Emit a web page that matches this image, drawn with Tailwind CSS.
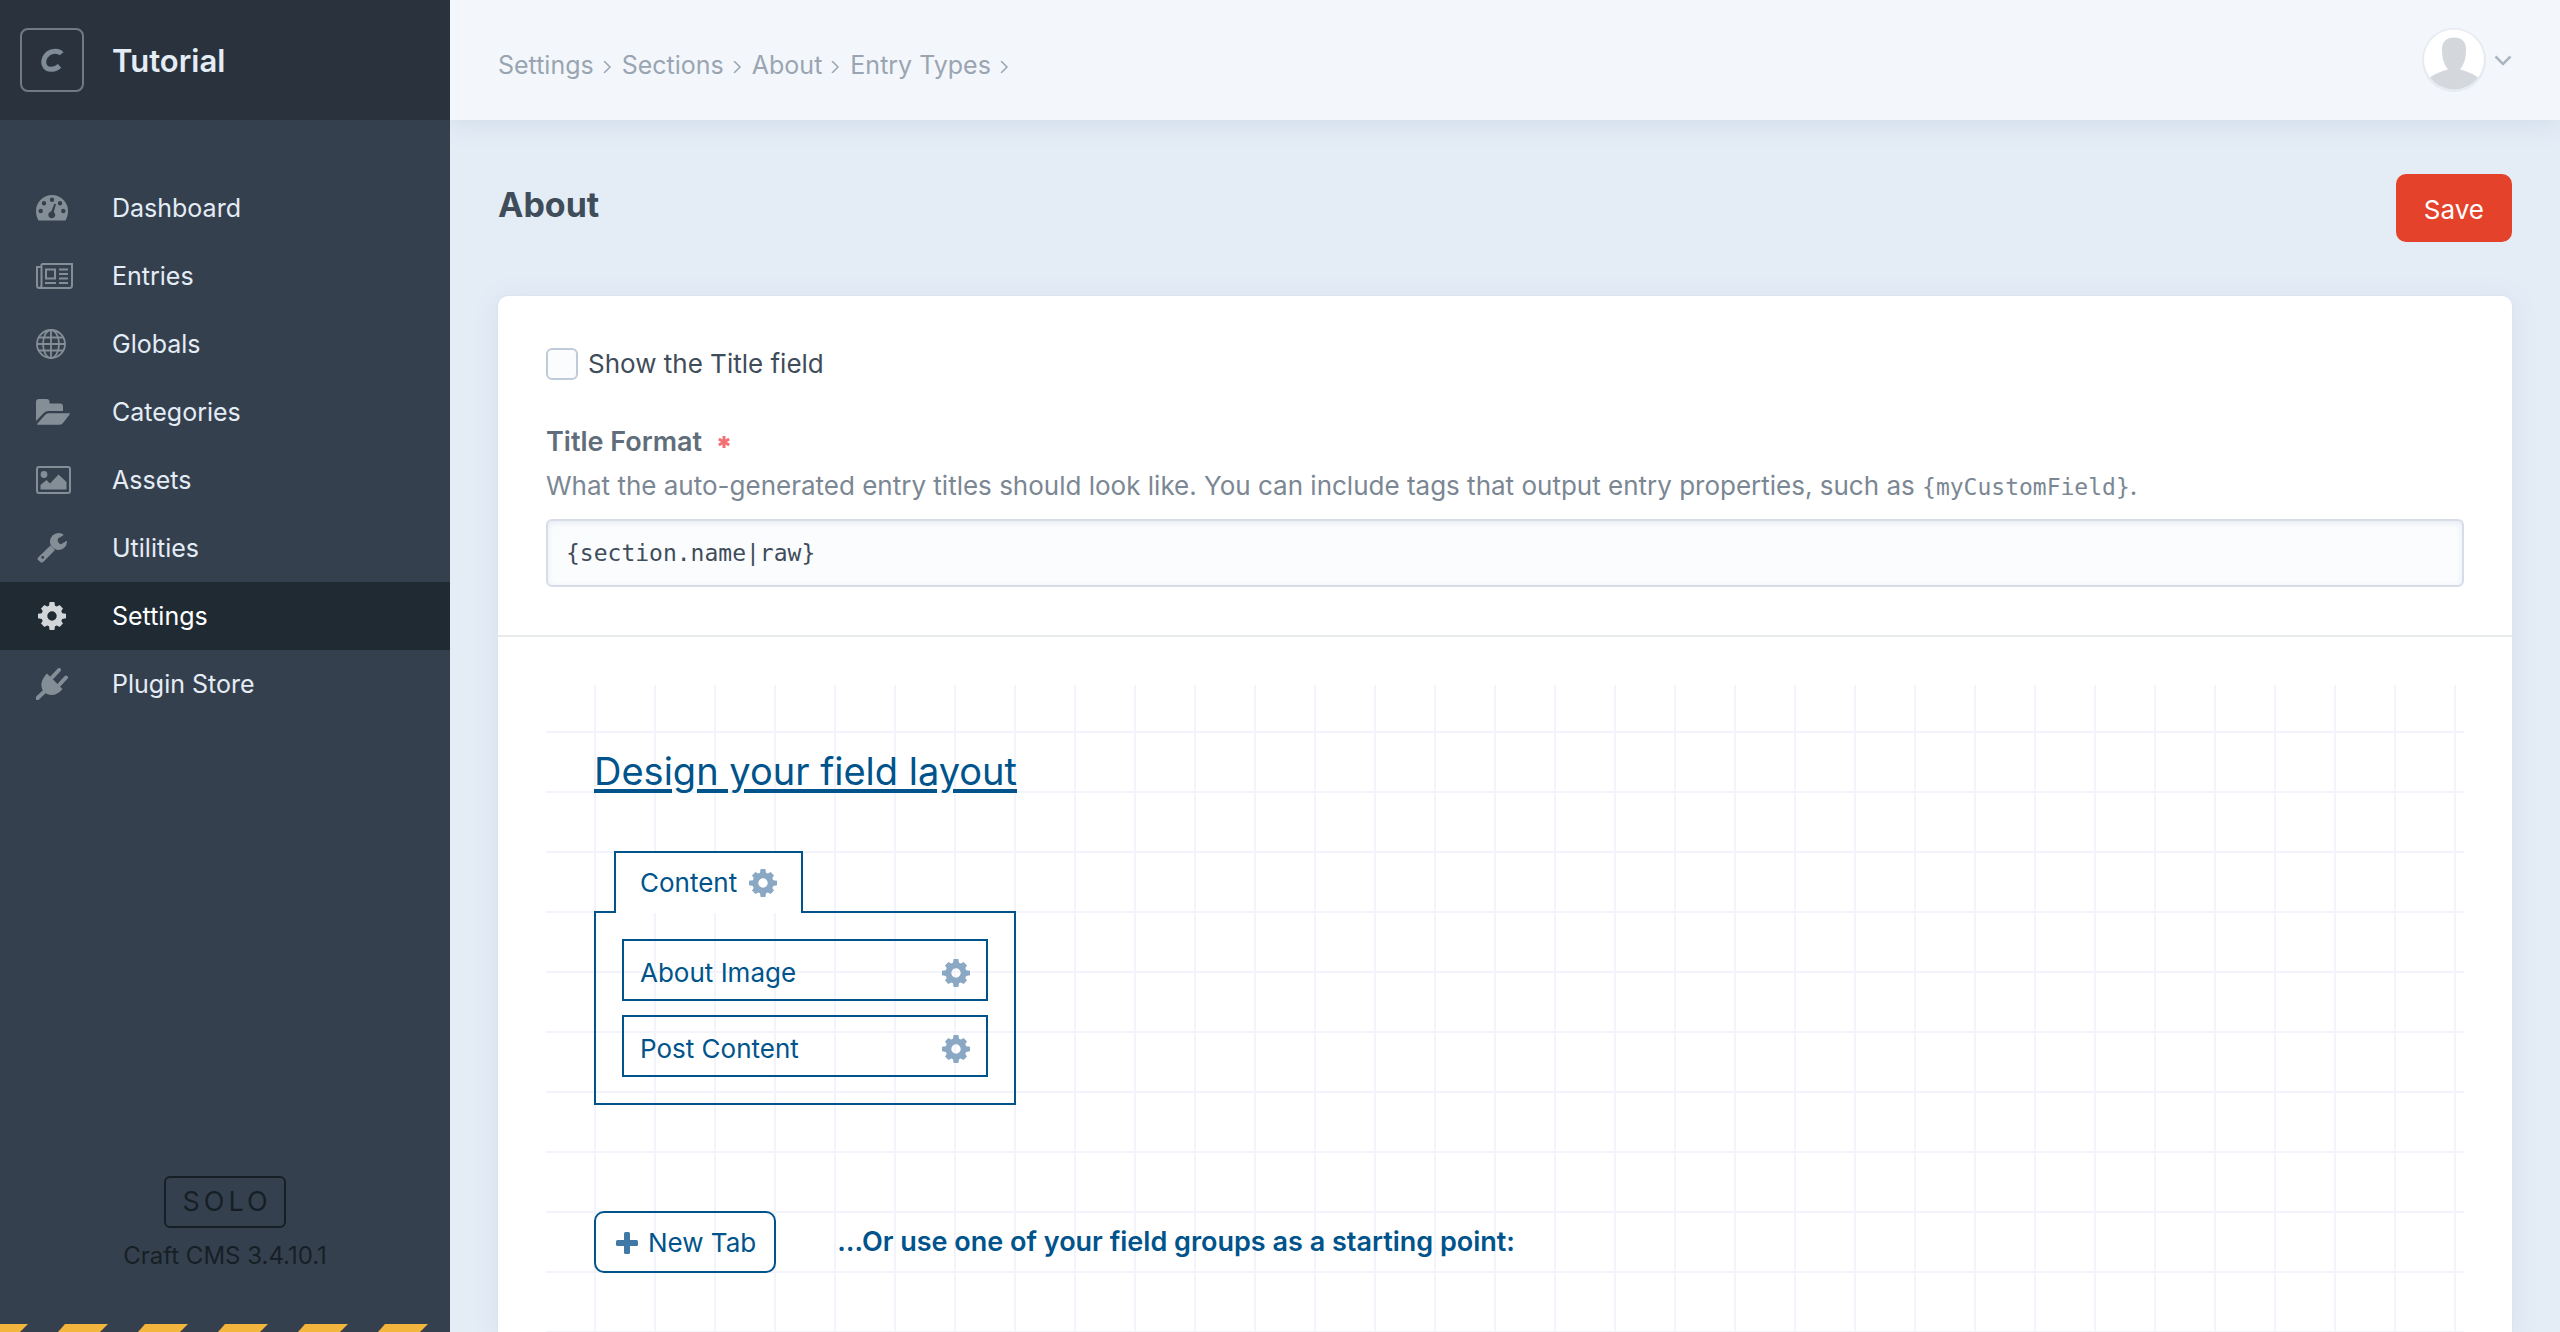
<!DOCTYPE html>
<html lang="en">
<head>
<meta charset="utf-8">
<title>About - Tutorial</title>
<script src="https://cdn.jsdelivr.net/npm/@tailwindcss/browser@4"></script>
</head>
<body class="flex h-screen overflow-hidden bg-[#e4ecf6] font-[Inter,sans-serif] text-[26px] leading-9 text-[#3f4d5a]">
<svg class="hidden">
  <symbol id="gear" viewBox="0 0 28 28"><path fill="currentColor" fill-rule="evenodd" d="M11.600 0.000L16.400 0.000L17.000 3.800L18.900 4.600L21.600 2.900L25.000 6.400L23.300 9.000L24.200 11.200L28.000 11.700L28.000 16.300L24.200 16.900L23.300 19.000L25.000 21.600L21.600 25.100L18.900 23.400L17.000 24.200L16.400 28.000L11.600 28.000L11.000 24.200L9.100 23.400L6.400 25.100L3.000 21.600L4.700 19.000L3.800 16.900L0.000 16.300L0.000 11.700L3.800 11.200L4.700 9.000L3.000 6.400L6.400 2.900L9.100 4.600L11.000 3.800ZM14 9.300a4.700 4.700 0 1 0 0 9.400a4.700 4.700 0 0 0 0-9.400Z"/></symbol>
</svg>

<aside class="z-20 flex w-[450px] shrink-0 flex-col bg-[#35404e]">
  <header class="flex h-[120px] shrink-0 items-center gap-7 bg-[#2a333d] px-5">
    <span class="flex size-16 items-center justify-center rounded-lg border-2 border-[#6e7b87] text-[#7f8c98]">
      <svg class="size-6" viewBox="0 0 24 24" fill="none" stroke="currentColor" stroke-width="5"><path d="M21.500 5.800C19 2.500 12.500 2.300 8.200 5.400C3.500 9 2.600 15.300 5.200 18.700C8.200 22.500 15 22 19.500 17.800"/></svg>
    </span>
    <h2 class="pt-[2px] text-[31px] leading-10 font-semibold text-[#e4ecf6]">Tutorial</h2>
  </header>
  <nav class="pt-[54px] text-[25px] text-[#e4ecf6]">
    <a href="#" class="flex h-[68px] items-center pl-9">
      <span class="w-[76px] text-[#848e96]"><svg class="h-[26px] w-8" viewBox="0 0 32 26"><path fill="currentColor" fill-rule="evenodd" d="M2.500 25.500C.900 22.500 0 19.500 0 16a16 16 0 0 1 32 0c0 3.500-.900 6.500-2.500 9.500ZM16 2.500a2.200 2.200 0 1 0 0 4.400a2.200 2.200 0 0 0 0-4.400ZM8 6a2.200 2.200 0 1 0 0 4.400A2.200 2.200 0 0 0 8 6ZM24 6a2.200 2.200 0 1 0 0 4.400A2.200 2.200 0 0 0 24 6ZM4.700 13.800a2.200 2.200 0 1 0 0 4.400a2.200 2.200 0 0 0 0-4.400ZM27.300 13.800a2.200 2.200 0 1 0 0 4.400a2.200 2.200 0 0 0 0-4.400ZM18.400 8.700L15.200 16.400A3.500 3.500 0 1 0 17.800 17L20 9.100Z"/></svg></span>
      <span>Dashboard</span></a>
    <a href="#" class="flex h-[68px] items-center pl-9">
      <span class="w-[76px] text-[#848e96]"><svg class="h-[26px] w-[37px]" viewBox="0 0 37 26" fill="none" stroke="currentColor" stroke-width="2"><path d="M5.500 1H36V22.500a2.500 2.500 0 0 1-2.500 2.500H3.500A2.500 2.500 0 0 1 1 22.500V4H5.500M5.500 1V22.500a2.500 2.500 0 0 1-2.200 2.500M10 6.500h9v9h-9zM23 6.500h9M23 11h9M23 15.500h9M9 20h11M23 20h9"/></svg></span>
      <span>Entries</span></a>
    <a href="#" class="flex h-[68px] items-center pl-9">
      <span class="w-[76px] text-[#848e96]"><svg class="size-[30px]" viewBox="0 0 30 30" fill="none" stroke="currentColor" stroke-width="1.800"><circle cx="15" cy="15" r="14"/><ellipse cx="15" cy="15" rx="8" ry="14"/><path d="M15 1V29M1 15H29M3 8.500H27M3 21.500H27"/></svg></span>
      <span>Globals</span></a>
    <a href="#" class="flex h-[68px] items-center pl-9">
      <span class="w-[76px] text-[#848e96]"><svg class="h-[26px] w-[34px]" viewBox="0 0 34 26" fill="currentColor"><path d="M0 22V3a3 3 0 0 1 3-3h7.500a3 3 0 0 1 3 3v1.500H24a3 3 0 0 1 3 3V12H12.500a7 7 0 0 0-5 2.200ZM1.500 24.500L9 16a5 5 0 0 1 3.500-1.800H33c1 0 1.200.600.600 1.400L27 24a4.500 4.500 0 0 1-3.300 1.800H2.200C1 25.800.800 25.200 1.500 24.500Z"/></svg></span>
      <span>Categories</span></a>
    <a href="#" class="flex h-[68px] items-center pl-9">
      <span class="w-[76px] text-[#848e96]"><svg class="h-7 w-[35px]" viewBox="0 0 35 28"><rect x="1" y="1" width="33" height="26" rx="2" fill="none" stroke="currentColor" stroke-width="2"/><circle cx="8" cy="8.500" r="3.400" fill="currentColor"/><path fill="currentColor" d="M4.500 23.500V19L10.500 14L14 17.500L22.500 8.500L30.500 16V23.500Z"/></svg></span>
      <span>Assets</span></a>
    <a href="#" class="flex h-[68px] items-center pl-9">
      <span class="w-[76px] text-[#848e96]"><svg class="size-8" viewBox="0 0 32 32" fill="currentColor"><path fill-rule="evenodd" d="M14.500 13.500L19 18L8 29.300A3.500 3.500 0 0 1 5 30.500L1.500 27.500A3.500 3.500 0 0 1 2.300 25.200ZM6.700 24a1.400 1.400 0 1 0 0 2.800a1.400 1.400 0 0 0 0-2.800Z"/><path d="M27 2.300A8.500 8.500 0 1 0 31 10c.100-1-.300-1.200-1-.800L25 12.200C23 11.700 21.800 10 21.700 8.200L22 6.500L27 3.600C27.500 3.200 27.500 2.700 27 2.300Z"/></svg></span>
      <span>Utilities</span></a>
    <a href="#" class="flex h-[68px] items-center bg-[#202a33] pl-9 text-white" aria-current="page">
      <span class="w-[76px] pl-[2px] text-[#d3d6d9]"><svg class="size-7"><use href="#gear"/></svg></span>
      <span>Settings</span></a>
    <a href="#" class="flex h-[68px] items-center pl-9">
      <span class="w-[76px] text-[#848e96]"><svg class="size-8" viewBox="0 0 32 32" fill="currentColor" stroke="currentColor"><path d="M11 5.500L26.500 21C21 28 13.500 28.500 8.500 24.500C3.500 19.500 4.500 12 11 5.500Z" stroke="none"/><path fill="none" stroke-width="4" stroke-linecap="round" d="M16 9.500L23 2M23.500 16.500L30 9.500"/><path fill="none" stroke-width="4" d="M-1 32.500L9 23"/></svg></span>
      <span>Plugin Store</span></a>
  </nav>
  <footer class="mt-auto flex shrink-0 flex-col items-center text-[#161f26]">
    <span class="rounded-md border-2 border-[#161f26] pr-3 pl-4 text-[27px] leading-12 tracking-[4px]">SOLO</span>
    <p class="mt-[10px] mb-[50px] text-[24px] leading-9">Craft CMS 3.4.10.1</p>
    <svg class="block h-2 w-full" aria-hidden="true"><defs><pattern id="stripes" width="80" height="8" patternUnits="userSpaceOnUse" x="-15"><path fill="#f4b53c" d="M0 0H43L35 8H0ZM80 0V8H73Z"/></pattern></defs><rect width="100%" height="8" fill="url(#stripes)"/></svg>
  </footer>
</aside>

<div class="flex min-w-0 flex-1 flex-col">
  <header class="z-10 flex h-[120px] shrink-0 items-center justify-between bg-[#f3f7fc] px-12 shadow-[0_2px_24px_#cddbe8]">
    <nav aria-label="Breadcrumbs" class="pt-[10px] text-[25px] text-[#9aa5b1]">
      <ol class="flex items-center gap-2">
        <li class="flex items-center gap-2"><a href="#">Settings</a><svg class="mt-1 size-3" viewBox="0 0 12 12" fill="none" stroke="currentColor" stroke-width="1.500"><path d="M2 0L8 6L2 12"/></svg></li>
        <li class="flex items-center gap-2"><a href="#">Sections</a><svg class="mt-1 size-3" viewBox="0 0 12 12" fill="none" stroke="currentColor" stroke-width="1.500"><path d="M2 0L8 6L2 12"/></svg></li>
        <li class="flex items-center gap-2"><a href="#">About</a><svg class="mt-1 size-3" viewBox="0 0 12 12" fill="none" stroke="currentColor" stroke-width="1.500"><path d="M2 0L8 6L2 12"/></svg></li>
        <li class="flex items-center gap-2"><a href="#">Entry Types</a><svg class="mt-1 size-3" viewBox="0 0 12 12" fill="none" stroke="currentColor" stroke-width="1.500"><path d="M2 0L8 6L2 12"/></svg></li>
      </ol>
    </nav>
    <button type="button" aria-label="My Account" class="flex items-center gap-2">
      <svg class="size-16" viewBox="0 0 64 64"><circle cx="32" cy="32" r="32" fill="#e6eaf1"/><circle cx="32" cy="31.500" r="30" fill="#fff"/><path fill="#d4d8dd" d="M32 9.500C40 9.500 44 14 44 21C44 31 42 36 38 41.500C44 43 50 45 56 49.500A30 30 0 0 1 8 49.500C14 45 20 43 26 41.500C22 36 20 31 20 21C20 14 24 9.500 32 9.500Z"/></svg>
      <svg class="h-4 w-[18px]" viewBox="0 0 18 16" fill="none" stroke="#abb6c1" stroke-width="2.500"><path d="M1.500 4.500L9 12L16.500 4.500"/></svg>
    </button>
  </header>

  <main class="flex min-h-0 flex-1 flex-col px-12 pt-[54px]">
    <div class="mb-[54px] flex h-[68px] shrink-0 items-start justify-between">
      <h1 class="pt-[7px] text-[34px] leading-12 font-bold">About</h1>
      <button type="button" class="h-[68px] rounded-[10px] bg-[#e5422b] px-7 pt-1 text-[26px] text-white">Save</button>
    </div>
    <form class="flex min-h-0 flex-1 flex-col rounded-t-[10px] bg-white shadow-[0_0_0_1px_#dae5f0,0_4px_24px_#d3dfec]">
      <div class="border-b-2 border-[#e7ebec] px-12 py-12">
        <div class="flex items-center gap-[10px]">
          <input id="show-title" type="checkbox" class="my-1 size-8 appearance-none rounded-md border-2 border-[#bfcbd9] bg-[#fbfcfe]">
          <label for="show-title">Show the Title field</label>
        </div>
        <div class="mt-9">
          <label for="title-format" class="flex items-center gap-4 py-1 text-[27px] font-semibold text-[#606d7b]">Title Format
            <svg class="size-3" viewBox="0 0 12 12" stroke="#f37174" stroke-width="3"><path d="M6 0V12M.800 3L11.200 9M.800 9L11.200 3"/></svg></label>
          <p id="title-help" class="py-1 text-[#7b8793]">What the auto-generated entry titles should look like. You can include tags that output entry properties, such as <code class="font-['DejaVu_Sans_Mono',monospace] text-[23px]">{myCustomField}</code>.</p>
          <input id="title-format" type="text" required aria-describedby="title-help" value="{section.name|raw}" class="mt-[10px] block h-[68px] w-full rounded-md border-2 border-[#d6dde8] bg-[#fbfcfe] px-[18px] font-['DejaVu_Sans_Mono',monospace] text-[23px] text-[#3f4d5a] shadow-[inset_0_2px_6px_#e6ebf3]">
        </div>
      </div>
      <div class="flex min-h-0 flex-1 flex-col px-12 pt-12">
        <section class="min-h-0 flex-1 bg-[linear-gradient(to_right,#f3f4fb_2px,transparent_2px),linear-gradient(to_bottom,#f3f4fb_2px,transparent_2px)] bg-size-[60px_60px] bg-position-[48px_46px] px-12 pt-[62px] text-[#00548b]">
          <h2 class="text-[38px] leading-12 underline decoration-4 underline-offset-4">Design your field layout</h2>
          <div class="mt-14 flex w-[422px] flex-col items-start">
            <div class="z-10 -mb-[2px] ml-5 flex h-[62px] items-center gap-3 border-2 border-b-0 border-[#00548b] bg-white px-6">
              <span>Content</span>
              <button type="button" aria-label="Content settings" class="text-[#8aa8c3]"><svg class="size-7"><use href="#gear"/></svg></button>
            </div>
            <ul class="flex w-full flex-col gap-[14px] border-2 border-[#00548b] p-[26px]">
              <li class="flex h-[62px] items-center justify-between border-2 border-[#00548b] px-4 pt-[6px]"><span>About Image</span>
                <button type="button" aria-label="About Image settings" class="text-[#8aa8c3]"><svg class="size-7"><use href="#gear"/></svg></button></li>
              <li class="flex h-[62px] items-center justify-between border-2 border-[#00548b] px-4 pt-[6px]"><span>Post Content</span>
                <button type="button" aria-label="Post Content settings" class="text-[#8aa8c3]"><svg class="size-7"><use href="#gear"/></svg></button></li>
            </ul>
          </div>
          <div class="mt-[106px] flex items-center gap-[61px]">
            <button type="button" class="flex h-[62px] items-center gap-[10px] rounded-[10px] border-2 border-[#00548b] pt-[2px] pr-[18px] pl-5">
              <svg class="size-[22px]" viewBox="0 0 22 22" fill="#4179a6"><rect x="8" width="6" height="22" rx="1.500"/><rect y="8" width="22" height="6" rx="1.500"/></svg>New Tab</button>
            <p class="text-[27px] font-semibold">…Or use one of your field groups as a starting point:</p>
          </div>
        </section>
      </div>
    </form>
  </main>
</div>
</body>
</html>
